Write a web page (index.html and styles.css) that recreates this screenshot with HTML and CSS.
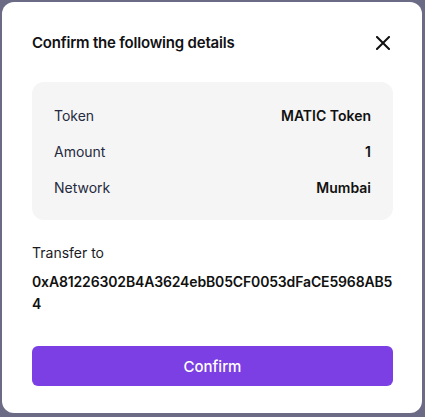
FILE: index.html
```html
<!DOCTYPE html>
<html>
<head>
<meta charset="utf-8">
<link rel="stylesheet" href="styles.css">
</head>
<body>
<div class="modal">
  <div class="header">
    <h2 class="title">Confirm the following details</h2>
    <button class="close" aria-label="Close">
      <svg width="14" height="14" viewBox="0 0 14 14"><path d="M1 1 L13 13 M13 1 L1 13" stroke="#111" stroke-width="2" stroke-linecap="square" fill="none"/></svg>
    </button>
  </div>
  <div class="details">
    <div class="row"><span class="label">Token</span><span class="value">MATIC Token</span></div>
    <div class="row"><span class="label">Amount</span><span class="value">1</span></div>
    <div class="row"><span class="label">Network</span><span class="value">Mumbai</span></div>
  </div>
  <div class="transfer">
    <div class="transfer-label">Transfer to</div>
    <div class="address">0xA81226302B4A3624ebB05CF0053dFaCE5968AB54</div>
  </div>
  <button class="confirm">Confirm</button>
</div>
</body>
</html>
```
FILE: styles.css
```css
* { box-sizing: border-box; }
html, body { margin: 0; padding: 0; }
body {
  background: #6c6b86;
  width: 425px;
  height: 417px;
  padding: 2px 3px 4px 2px;
  font-family: Inter, "Noto Sans", sans-serif;
}
.modal {
  width: 420px;
  height: 411px;
  background: #fff;
  border-radius: 12px;
  padding: 29px 29px 0 30px;
  display: flex;
  flex-direction: column;
}
.header {
  display: flex;
  align-items: center;
  justify-content: space-between;
  height: 24px;
}
.title {
  margin: 0;
  font-size: 15px;
  font-weight: 600;
  letter-spacing: -0.2px;
  color: #111114;
  line-height: 24px;
}
.close {
  border: none;
  background: none;
  padding: 0;
  margin-right: 3px;
  width: 14px;
  height: 14px;
  display: flex;
}
.details {
  margin-top: 27px;
  background: #f5f5f5;
  border-radius: 12px;
  padding: 15px 22px;
}
.row {
  display: flex;
  justify-content: space-between;
  align-items: center;
  height: 36px;
  font-size: 14px;
}
.label { color: #262a40; }
.value { color: #111; font-weight: 600; }
.transfer {
  margin-top: 22px;
}
.transfer-label {
  font-size: 14px;
  line-height: 22px;
  color: #1a1a1f;
}
.address {
  margin-top: 7px;
  font-size: 14px;
  font-weight: 600;
  letter-spacing: -0.15px;
  line-height: 22px;
  color: #111;
  word-break: break-all;
}
.confirm {
  margin-top: 31px;
  height: 40px;
  border: none;
  border-radius: 6px;
  background: #7b3fe4;
  color: #fff;
  font-family: Inter, "Noto Sans", sans-serif;
  font-size: 15px;
  font-weight: 500;
}
```
